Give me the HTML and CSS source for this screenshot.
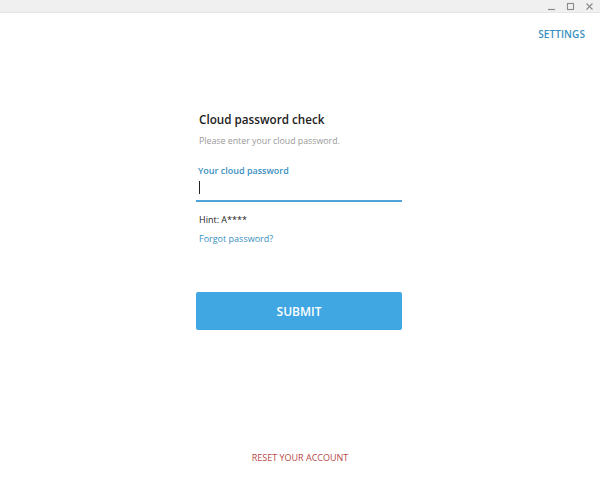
FILE: index.html
```html
<!DOCTYPE html>
<html>
<head>
<meta charset="utf-8">
<link rel="stylesheet" href="styles.css">
</head>
<body>
<div class="window">
  <div class="titlebar">
    <span class="tb-btn"><svg width="9" height="9" viewBox="0 0 9 9"><path d="M1 7.5h7" stroke="#8a8a8a" stroke-width="1.2"/></svg></span>
    <span class="tb-btn"><svg width="9" height="9" viewBox="0 0 9 9"><rect x="1.5" y="1.5" width="6" height="6" fill="none" stroke="#8a8a8a" stroke-width="1.1"/></svg></span>
    <span class="tb-btn"><svg width="9" height="9" viewBox="0 0 9 9"><path d="M1.5 1.5l6 6M7.5 1.5l-6 6" stroke="#8a8a8a" stroke-width="1.1"/></svg></span>
  </div>
  <div class="topbar"><a class="settings">SETTINGS</a></div>
  <div class="content">
    <div class="form">
      <h1 class="title">Cloud password check</h1>
      <p class="subtitle">Please enter your cloud password.</p>
      <label class="field-label">Your cloud password</label>
      <div class="field"><span class="cursor"></span></div>
      <p class="hint">Hint: A****</p>
      <a class="forgot">Forgot password?</a>
      <button class="submit">SUBMIT</button>
    </div>
  </div>
  <div class="footer"><a class="reset">RESET YOUR ACCOUNT</a></div>
</div>
</body>
</html>
```
FILE: styles.css
```css
* { box-sizing: border-box; }
html, body { margin: 0; padding: 0; background: #fff; }
body { font-family: "Open Sans", "Noto Sans", sans-serif; width: 600px; height: 482px; overflow: hidden; }
.window { display: flex; flex-direction: column; height: 482px; }
.titlebar {
  height: 13px; background: #f0f0f0; border-bottom: 1px solid #e6e6e6;
  display: flex; justify-content: flex-end; align-items: center; padding-right: 6px; gap: 10px;
}
.tb-btn { width: 9px; height: 9px; display: flex; }
.topbar { display: flex; justify-content: flex-end; padding: 13px 15px 0 0; height: 42px; }
.settings { font-size: 10px; font-weight: 600; color: #3a8fc0; letter-spacing: 0.1px; line-height: 16px; }
.content { flex: 1; display: flex; justify-content: center; padding-right: 2px; }
.form { width: 206px; padding-top: 55px; display: flex; flex-direction: column; }
.title { margin: 0 0 0 3px; font-size: 11.7px; font-weight: 600; color: #222; line-height: 18px; }
.subtitle { margin: 6px 0 0 3px; font-size: 8.8px; color: #999; line-height: 14px; }
.field-label { margin: 16px 0 0 2px; font-size: 9px; font-weight: 600; color: #3a8fc0; line-height: 14px; }
.field { height: 24px; border-bottom: 2px solid #4ea4d9; padding: 3px 0 0 3px; }
.cursor { display: block; width: 1px; height: 13px; background: #222; }
.hint { margin: 11px 0 0 3px; font-size: 9px; color: #222; line-height: 14px; }
.forgot { margin: 5px 0 0 3px; font-size: 9px; color: #3a8fc0; line-height: 14px; }
.submit {
  margin-top: 46px; height: 38px; width: 206px; border: none; border-radius: 2px;
  background: #40a7e3; color: #fff; font-family: inherit; font-size: 12px; font-weight: 600; padding: 0;
}
.footer { display: flex; justify-content: center; padding-bottom: 17px; }
.reset { font-size: 9px; color: #b84848; line-height: 14px; }
```
